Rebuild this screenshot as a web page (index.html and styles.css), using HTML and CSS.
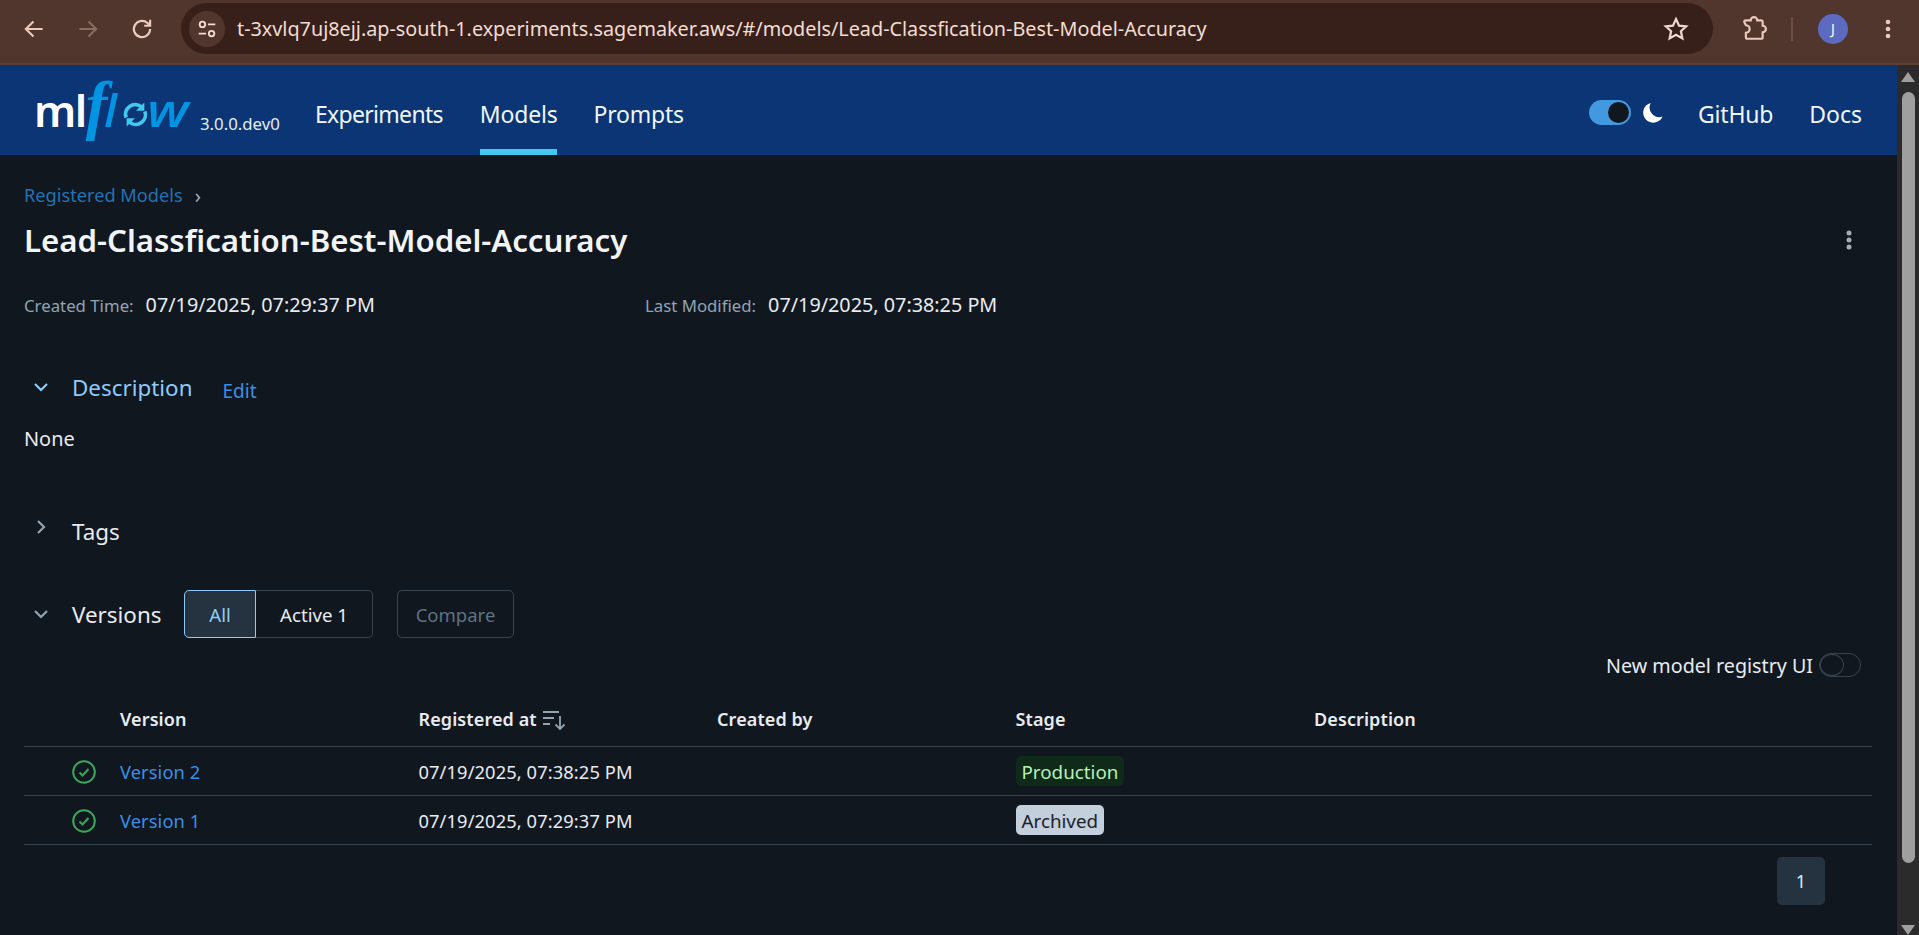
FILE: index.html
```html
<!DOCTYPE html>
<html>
	<head>
		<title>Lead-Classfication-Best-Model-Accuracy - MLflow</title>
		<link rel="stylesheet" href="styles.css">
	</head>
	<body>
		<div class="chrome">
			<svg class="chrome-icon back" viewBox="0 0 24 24"><path d="M20 12H5M11.5 5 4.5 12l7 7"/></svg>
			<svg class="chrome-icon forward" viewBox="0 0 24 24"><path d="M4 12h15M12.5 5l7 7-7 7"/></svg>
			<svg class="chrome-icon reload" viewBox="0 0 24 24"><path d="M19.5 12a7.5 7.5 0 1 1-2.4-5.5L19.5 9M19.5 3.5V9H14"/></svg>
			<div class="omnibox">
				<div class="site-info">
					<svg viewBox="0 0 24 24"><circle cx="7" cy="7" r="3"/><path d="M13 7h8M3 17h8"/><circle cx="17" cy="17" r="3"/></svg>
				</div>
				<span class="url">t-3xvlq7uj8ejj.ap-south-1.experiments.sagemaker.aws/#/models/Lead-Classfication-Best-Model-Accuracy</span>
				<svg class="chrome-icon star" viewBox="0 0 24 24"><path d="M12 2.8l2.8 6.1 6.6.7-4.9 4.5 1.4 6.6-5.9-3.4-5.900 3.400 1.400-6.600-4.900-4.500 6.600-.7z"/></svg>
			</div>
			<svg class="chrome-icon puzzle" viewBox="0 0 24 24"><path d="M3 5.500c0-1 .7-1.500 1.500-1.500H9a3 3 0 0 1 6 0h3.500c1 0 1.500.7 1.500 1.500V9a3 3 0 0 1 0 6v4.500c0 1-.7 1.500-1.500 1.500H6c-1 0-1.500-.7-1.500-1.500V15.500a3.500 3.500 0 0 0 0-7z"/></svg>
			<div class="chrome-divider"></div>
			<div class="avatar">J</div>
			<svg class="chrome-kebab" viewBox="0 0 6 24"><circle cx="3" cy="5" r="2.300"/><circle cx="3" cy="12" r="2.300"/><circle cx="3" cy="19" r="2.300"/></svg>
		</div>

		<div class="viewport">
			<div class="app">
				<div class="navbar">
					<div class="logo">
						<span class="logo-ml">ml</span><span class="logo-f">f</span><span class="logo-l">l</span><svg class="logo-o" viewBox="0 0 24 24"><path d="M3 15A9.300 9.300 0 0 1 17.500 4.500M21 9a9.300 9.300 0 0 1-14.500 10.500"/><path class="logo-tip" d="M20.500 .5v8h-8zM3.500 23.500v-8h8z"/></svg><span class="logo-w">w</span>
					</div>
					<span class="version">3.0.0.dev0</span>
					<a class="nav-link exp">Experiments</a>
					<a class="nav-link active">Models</a>
					<a class="nav-link">Prompts</a>
					<div class="nav-right">
						<div class="theme-switch"><div class="theme-knob"></div></div>
						<svg class="moon" viewBox="0 0 24 24"><path d="M10 1a11.500 11.500 0 1 0 13.500 15.500A11 11 0 0 1 10 1z"/></svg>
						<a class="nav-link github">GitHub</a>
						<a class="nav-link docs">Docs</a>
					</div>
				</div>

				<div class="main">
					<div class="breadcrumb"><a>Registered Models</a><span class="crumb-sep">›</span></div>
					<div class="title-row">
						<h1>Lead-Classfication-Best-Model-Accuracy</h1>
						<svg class="kebab" viewBox="0 0 6 24"><circle cx="3" cy="5" r="2.500"/><circle cx="3" cy="12" r="2.500"/><circle cx="3" cy="19" r="2.500"/></svg>
					</div>
					<div class="meta">
						<div class="meta-item"><span class="meta-label">Created Time:</span><span class="meta-value">07/19/2025, 07:29:37 PM</span></div>
						<div class="meta-item"><span class="meta-label">Last Modified:</span><span class="meta-value">07/19/2025, 07:38:25 PM</span></div>
					</div>

					<div class="section-head desc-head">
						<svg class="chev open blue" viewBox="0 0 16 16"><path d="M2 5l6 6 6-6"/></svg>
						<span class="section-title blue-text">Description</span>
						<a class="edit">Edit</a>
					</div>
					<div class="none-text">None</div>

					<div class="section-head tags-head">
						<svg class="chev closed" viewBox="0 0 16 16"><path d="M5 2l6 6-6 6"/></svg>
						<span class="section-title">Tags</span>
					</div>

					<div class="section-head versions-head">
						<svg class="chev open" viewBox="0 0 16 16"><path d="M2 5l6 6 6-6"/></svg>
						<span class="section-title versions-title">Versions</span>
						<div class="segmented">
							<div class="seg seg-on">All</div>
							<div class="seg seg-off">Active 1</div>
						</div>
						<div class="compare">Compare</div>
					</div>

					<div class="toggle-row">
						<span>New model registry UI</span>
						<div class="small-switch"><div class="small-knob"></div></div>
					</div>

					<div class="table">
						<div class="tr th">
							<div></div>
							<div>Version</div>
							<div class="sort-cell">Registered at
								<svg class="sort-icon" viewBox="0 0 24 24"><path d="M1 5h16M1 11h11M1 17h7M18 9v13M13.500 17.500 18 22l4.500-4.500"/></svg>
							</div>
							<div>Created by</div>
							<div>Stage</div>
							<div>Description</div>
						</div>
						<div class="tr">
							<div class="status"><svg viewBox="0 0 24 24"><circle cx="12" cy="12" r="10.800"/><path d="M7.500 12.500l3 3 6-6.500"/></svg></div>
							<div><a class="link">Version 2</a></div>
							<div>07/19/2025, 07:38:25 PM</div>
							<div></div>
							<div><span class="tag tag-prod">Production</span></div>
							<div></div>
						</div>
						<div class="tr">
							<div class="status"><svg viewBox="0 0 24 24"><circle cx="12" cy="12" r="10.800"/><path d="M7.500 12.500l3 3 6-6.500"/></svg></div>
							<div><a class="link">Version 1</a></div>
							<div>07/19/2025, 07:29:37 PM</div>
							<div></div>
							<div><span class="tag tag-arch">Archived</span></div>
							<div></div>
						</div>
					</div>

					<div class="pager"><div class="page-btn">1</div></div>
				</div>
			</div>

			<div class="scrollbar">
				<div class="arrow-up"></div>
				<div class="thumb"></div>
				<div class="arrow-down"></div>
			</div>
		</div>
	</body>
</html>
```

FILE: styles.css
```css
* {
	box-sizing: border-box;
}
html, body {
	height: 100%;
}
body {
	margin: 0;
	display: flex;
	flex-direction: column;
	overflow: hidden;
	background-color: #11171f;
	color: #e8ecf1;
	font-family: "Noto Sans", sans-serif;
	font-size: 18px;
}
a {
	text-decoration: none;
}

/* browser toolbar */
.chrome {
	height: 65px;
	flex: none;
	display: flex;
	align-items: center;
	padding: 0 0 6px 21px;
	background-color: #50362d;
	border-bottom: 2px solid #5c4034;
}
.chrome-icon {
	width: 26px;
	height: 26px;
	fill: none;
	stroke: #ecc9ba;
	stroke-width: 2;
}
.forward {
	margin-left: 28px;
	stroke: #8a6d61;
}
.reload {
	margin-left: 28px;
}
.omnibox {
	width: 1532px;
	height: 51px;
	margin-left: 26px;
	padding: 0 24px 0 8px;
	display: flex;
	align-items: center;
	background-color: #38201a;
	border-radius: 26px;
}
.site-info {
	width: 36px;
	height: 36px;
	display: flex;
	align-items: center;
	justify-content: center;
	background-color: #50362d;
	border-radius: 50%;
}
.site-info svg {
	width: 22px;
	height: 22px;
	fill: none;
	stroke: #f3dcd2;
	stroke-width: 2;
}
.url {
	margin-left: 12px;
	flex: 1;
	font-size: 19.800px;
	color: #f3dcd2;
	white-space: nowrap;
}
.star {
	stroke: #f0d9cf;
}
.puzzle {
	margin-left: 28px;
}
.chrome-divider {
	width: 2px;
	height: 24px;
	margin-left: 24px;
	background-color: #6d4d41;
}
.avatar {
	width: 30px;
	height: 30px;
	margin-left: 25px;
	display: flex;
	align-items: center;
	justify-content: center;
	background-color: #5c6bc0;
	border-radius: 50%;
	color: #fff;
	font-size: 14px;
}
.chrome-kebab {
	width: 6px;
	height: 24px;
	margin-left: 37px;
	fill: #ecc9ba;
}

/* page + fake scrollbar */
.viewport {
	flex: 1;
	min-height: 0;
	display: flex;
}
.app {
	flex: 1;
	min-width: 0;
}
.scrollbar {
	width: 22px;
	flex: none;
	display: flex;
	flex-direction: column;
	align-items: center;
	background-color: #2b2b2b;
}
.arrow-up {
	margin-top: 7px;
	border-left: 7px solid transparent;
	border-right: 7px solid transparent;
	border-bottom: 10px solid #9f9f9f;
}
.thumb {
	width: 13px;
	height: 773px;
	margin-top: 10px;
	background-color: #9f9f9f;
	border-radius: 7px;
}
.arrow-down {
	margin-top: 62px;
	border-left: 7px solid transparent;
	border-right: 7px solid transparent;
	border-top: 10px solid #9f9f9f;
}

/* navbar */
.navbar {
	height: 90px;
	display: flex;
	align-items: center;
	padding-left: 34px;
	background-color: #0b3575;
}
.logo {
	width: 158px;
	height: 90px;
	padding-top: 8px;
	display: flex;
	align-items: baseline;
	line-height: 1;
	white-space: nowrap;
}
.logo-ml {
	font-size: 44px;
	font-weight: 600;
	letter-spacing: -1.500px;
	color: #fff;
}
.logo-f {
	font-family: "Liberation Serif", serif;
	font-size: 65px;
	font-weight: 700;
	font-style: italic;
	letter-spacing: -3px;
	color: #0194e2;
}
.logo-l {
	font-family: "Open Sans", sans-serif;
	font-size: 46px;
	font-style: italic;
	font-weight: 600;
	color: #0194e2;
}
.logo-o {
	width: 25px;
	height: 25px;
	margin-left: 6px;
	fill: none;
	stroke: #43c9ed;
	stroke-width: 3.500;
}
.logo-tip {
	fill: #43c9ed;
	stroke: none;
}
.logo-w {
	margin-left: -1px;
	font-family: "Open Sans", sans-serif;
	font-size: 46px;
	font-style: italic;
	font-weight: 600;
	color: #0194e2;
	transform: scaleX(1.2);
	transform-origin: left bottom;
}
.version {
	width: 123px;
	padding: 26px 0 0 8px;
	font-size: 16.800px;
}
.nav-link {
	height: 90px;
	display: flex;
	align-items: center;
	margin-right: 36px;
	padding-top: 14px;
	font-size: 23px;
	letter-spacing: -0.2px;
	color: #f1f5f9;
	border-bottom: 6px solid transparent;
}
.nav-link.exp {
	margin-right: 37px;
	letter-spacing: -0.7px;
}
.nav-link.active {
	border-bottom-color: #43c9ed;
}
.nav-right {
	margin-left: auto;
	display: flex;
	align-items: center;
}
.theme-switch {
	width: 42px;
	height: 25px;
	margin-top: 5px;
	padding: 2px;
	display: flex;
	justify-content: flex-end;
	background-color: #4299e0;
	border-radius: 13px;
}
.theme-knob {
	width: 21px;
	height: 21px;
	background-color: #11171f;
	border-radius: 50%;
}
.moon {
	width: 21px;
	height: 21px;
	margin: 5px 0 0 11px;
	fill: #fff;
}
.github {
	margin: 0 36px 0 35px;
}
.docs {
	margin-right: 35px;
	letter-spacing: 0;
}

/* main content */
.main {
	padding: 28px 25px 0 24px;
}
.breadcrumb {
	height: 24px;
	display: flex;
	align-items: center;
	font-size: 18.200px;
}
.breadcrumb a {
	color: #2272b4;
}
.crumb-sep {
	margin-left: 12px;
	color: #a3aebd;
	font-size: 20px;
}
.title-row {
	height: 44px;
	margin-top: 11px;
	display: flex;
	align-items: center;
	justify-content: space-between;
}
h1 {
	margin: 0;
	font-size: 31.200px;
	font-weight: 600;
	color: #f1f5f9;
}
.kebab {
	width: 6px;
	height: 24px;
	margin-right: 20px;
	fill: #a3aebd;
}
.meta {
	height: 24px;
	margin-top: 30px;
	display: flex;
	align-items: center;
}
.meta-item {
	width: 621px;
	display: flex;
	align-items: baseline;
}
.meta-label {
	margin-right: 12px;
	font-size: 16.800px;
	color: #92a4b3;
}
.meta-value {
	font-size: 19.800px;
}
.section-head {
	height: 32px;
	display: flex;
	align-items: center;
}
.desc-head {
	margin-top: 55px;
}
.tags-head {
	margin-top: 65px;
}
.versions-head {
	height: 48px;
	margin-top: 43px;
}
.chev {
	width: 16px;
	height: 16px;
	margin: 0 23px 0 9px;
	fill: none;
	stroke: #92a4b3;
	stroke-width: 2.200;
}
.chev.blue {
	stroke: #8ecbfb;
}
.chev.closed {
	margin-top: -8px;
}
.section-title {
	font-size: 22.400px;
}
.blue-text {
	color: #8ecbfb;
}
.edit {
	margin: 8px 0 0 30px;
	font-size: 19px;
	color: #3b8fe5;
}
.none-text {
	height: 24px;
	margin-top: 23px;
	display: flex;
	align-items: center;
	font-size: 19.900px;
}
.versions-title {
	width: 112px;
}
.segmented {
	display: flex;
	height: 48px;
}
.seg {
	display: flex;
	align-items: center;
	justify-content: center;
	font-size: 18.700px;
}
.seg-on {
	width: 72px;
	background-color: #24333f;
	border: 1px solid #8ecbfb;
	border-radius: 5px 0 0 5px;
	color: #8ecbfb;
}
.seg-off {
	width: 117px;
	border: 1px solid #37444f;
	border-left: none;
	border-radius: 0 5px 5px 0;
}
.compare {
	width: 117px;
	height: 48px;
	margin-left: 24px;
	display: flex;
	align-items: center;
	justify-content: center;
	font-size: 18.500px;
	color: #5f7281;
	border: 1px solid #37444f;
	border-radius: 5px;
}
.toggle-row {
	height: 24px;
	margin-top: 15px;
	padding-right: 11px;
	display: flex;
	align-items: center;
	justify-content: flex-end;
	font-size: 19.700px;
}
.small-switch {
	width: 42px;
	height: 24px;
	margin-left: 6px;
	border: 1px solid #37444f;
	border-radius: 12px;
}
.small-knob {
	width: 24px;
	height: 22px;
	border: 1px solid #37444f;
	border-radius: 50%;
}
.table {
	margin-top: 19px;
}
.tr {
	height: 49px;
	display: grid;
	grid-template-columns: 96px repeat(4, 298.500px) 1fr;
	align-items: center;
	border-bottom: 1px solid #37444f;
	font-size: 18.300px;
	letter-spacing: 0.1px;
}
.th {
	height: 51px;
	padding-bottom: 4px;
	font-size: 18px;
	font-weight: 600;
}
.sort-cell {
	display: flex;
	align-items: center;
}
.sort-icon {
	width: 24px;
	height: 24px;
	margin-left: 5px;
	fill: none;
	stroke: #92a4b3;
	stroke-width: 1.800;
}
.status {
	display: flex;
	justify-content: flex-end;
	padding: 1px 24px 0 0;
}
.status svg {
	width: 24px;
	height: 24px;
	fill: none;
	stroke: #3ca55c;
	stroke-width: 2;
}
.link {
	color: #3b8fe5;
}
.tag {
	display: inline-block;
	height: 30px;
	line-height: 32px;
	padding: 0 6px;
	border-radius: 5px;
	font-size: 18.800px;
	letter-spacing: 0;
}
.tag-prod {
	background-color: #0f2a18;
	color: #b7f0b5;
}
.tag-arch {
	background-color: #c3cfdb;
	color: #1a222c;
}
.pager {
	margin-top: 12px;
	padding-right: 47px;
	display: flex;
	justify-content: flex-end;
}
.page-btn {
	width: 48px;
	height: 48px;
	display: flex;
	align-items: center;
	justify-content: center;
	background-color: #24333f;
	border-radius: 5px;
	color: #cfe8fb;
	font-size: 18px;
}
```
